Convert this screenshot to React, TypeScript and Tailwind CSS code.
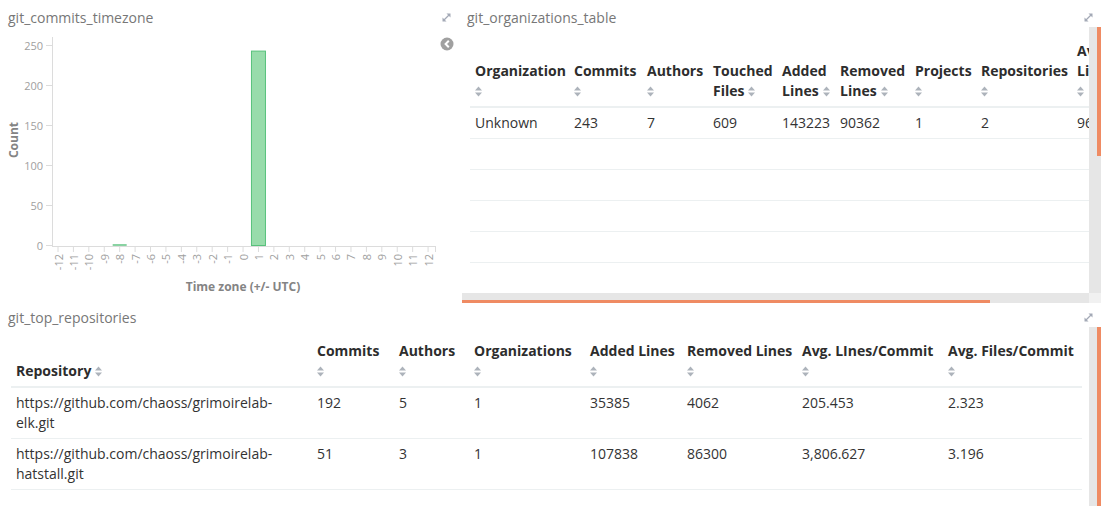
import React from 'react';

function ExpandIcon() {
  return (
    <svg width="9" height="9" viewBox="0 0 9 9">
      <line x1="1.5" y1="7.5" x2="7.5" y2="1.5" stroke="#a3a9b6" strokeWidth="1.2" />
      <path d="M4.5 0.5 H8.5 V4.5 Z" fill="#a3a9b6" />
      <path d="M0.5 4.5 V8.5 H4.5 Z" fill="#a3a9b6" />
    </svg>
  );
}

function SortIcon({ inline }: { inline?: boolean }) {
  return (
    <svg
      width="7"
      height="11"
      viewBox="0 0 7 11"
      className={inline ? 'ml-[4px] inline-block align-[-1px]' : 'inline-block align-[-1px]'}
    >
      <path d="M0 4.5 L3.5 0.5 L7 4.5 Z M0 6.5 L3.5 10.5 L7 6.5 Z" fill="#adb3bb" />
    </svg>
  );
}

type Col = { lines: string[]; inline?: boolean; w: string };

function HeaderCell({ col }: { col: Col }) {
  const last = col.lines.length - 1;
  return (
    <th
      className={`${col.w} border-b-2 border-[#ecf0f1] px-[5px] pt-[5px] pb-[5px] text-left align-bottom text-[14px] font-bold leading-[20px] text-[#2d2d2d]`}
    >
      {col.lines.map((l, i) => (
        <div key={i} className="whitespace-nowrap">
          {l}
          {col.inline && i === last && <SortIcon inline />}
        </div>
      ))}
      {!col.inline && (
        <div className="leading-[20px]">
          <SortIcon />
        </div>
      )}
    </th>
  );
}

const orgCols: Col[] = [
  { lines: ['Organization'], w: 'w-[99px]' },
  { lines: ['Commits'], w: 'w-[73px]' },
  { lines: ['Authors'], w: 'w-[66px]' },
  { lines: ['Touched', 'Files'], inline: true, w: 'w-[69px]' },
  { lines: ['Added', 'Lines'], inline: true, w: 'w-[58px]' },
  { lines: ['Removed', 'Lines'], inline: true, w: 'w-[75px]' },
  { lines: ['Projects'], w: 'w-[66px]' },
  { lines: ['Repositories'], w: 'w-[96px]' },
  { lines: ['Avg.', 'Lines/Commit'], w: 'w-[100px]' },
  { lines: ['Avg.', 'Files/Commit'], w: 'w-[100px]' },
];

const orgRow = ['Unknown', '243', '7', '609', '143223', '90362', '1', '2', '961.255', '2.506'];

const repoCols: Col[] = [
  { lines: ['Repository'], inline: true, w: 'w-[301px]' },
  { lines: ['Commits'], w: 'w-[82px]' },
  { lines: ['Authors'], w: 'w-[75px]' },
  { lines: ['Organizations'], w: 'w-[116px]' },
  { lines: ['Added Lines'], w: 'w-[97px]' },
  { lines: ['Removed Lines'], w: 'w-[115px]' },
  { lines: ['Avg. LInes/Commit'], w: 'w-[146px]' },
  { lines: ['Avg. Files/Commit'], w: 'w-[139px]' },
];

const repoRows = [
  [['https://github.com/chaoss/grimoirelab-', 'elk.git'], '192', '5', '1', '35385', '4062', '205.453', '2.323'],
  [['https://github.com/chaoss/grimoirelab-', 'hatstall.git'], '51', '3', '1', '107838', '86300', '3,806.627', '3.196'],
] as const;

const tdClass =
  'border-b border-[#ecf0f1] px-[5px] pt-[5px] pb-[5px] text-left align-top text-[14px] leading-[20px] text-[#333]';

function TimezoneChart() {
  const ticks = Array.from({ length: 25 }, (_, i) => i - 12);
  const tx = (i: number) => 58 + i * 15.42;
  const yv = (v: number) => 245.5 - v * 0.8;
  return (
    <svg width="460" height="276" viewBox="0 27 460 276" className="block">
      {/* y axis */}
      <line x1="52.5" y1="37" x2="52.5" y2="246.5" stroke="#dcdcdc" />
      {[0, 50, 100, 150, 200, 250].map((v) => (
        <g key={v}>
          <line x1="46" y1={yv(v)} x2="52.5" y2={yv(v)} stroke="#dcdcdc" />
          <text
            x="43"
            y={yv(v)}
            textAnchor="end"
            dominantBaseline="central"
            fontSize="11"
            fill="#a0a0a0"
            fontFamily="'Open Sans', sans-serif"
          >
            {v}
          </text>
        </g>
      ))}
      <text
        x="13"
        y="140"
        transform="rotate(-90 13 140)"
        textAnchor="middle"
        dominantBaseline="central"
        fontSize="12"
        fontWeight="700"
        fill="#848484"
        fontFamily="'Open Sans', sans-serif"
      >
        Count
      </text>
      {/* x axis */}
      <line x1="52" y1="246.5" x2="436" y2="246.5" stroke="#dcdcdc" />
      <line x1="435.5" y1="246.5" x2="435.5" y2="252" stroke="#dcdcdc" />
      {ticks.map((t, i) => (
        <g key={t}>
          <line x1={tx(i)} y1="246.5" x2={tx(i)} y2="252" stroke="#dcdcdc" />
          <text
            x={tx(i)}
            y="254"
            transform={`rotate(-90 ${tx(i)} 254)`}
            textAnchor="end"
            dominantBaseline="central"
            fontSize="11"
            fill="#a0a0a0"
            fontFamily="'Open Sans', sans-serif"
          >
            {t}
          </text>
        </g>
      ))}
      {/* bars */}
      <rect x={tx(4) - 7} y="244.3" width="14" height="1.4" fill="#57c17b" />
      <rect x={tx(13) - 7} y={yv(243)} width="14" height={245.5 - yv(243)} fill="#98dcab" stroke="#57c17b" />
      <text
        x="243"
        y="286"
        textAnchor="middle"
        dominantBaseline="central"
        fontSize="12"
        fontWeight="700"
        fill="#848484"
        fontFamily="'Open Sans', sans-serif"
      >
        Time zone (+/- UTC)
      </text>
      {/* legend toggle */}
      <circle cx="447" cy="44" r="6.5" fill="#a0a0a0" />
      <path d="M448.8 40.8 L445.6 44 L448.8 47.2" fill="none" stroke="#fff" strokeWidth="2" />
    </svg>
  );
}

export default function App() {
  return (
    <div className="flex h-[506px] w-[1101px] flex-col overflow-hidden bg-white font-['Open_Sans',sans-serif]">
      <div className="flex h-[303px]">
        {/* left panel */}
        <div className="flex w-[460px] flex-col">
          <div className="flex h-[27px] items-start justify-between pl-[8px] pr-[9px] pt-[9px]">
            <span className="text-[14px] leading-[18px] text-[#777]">git_commits_timezone</span>
            <span className="pt-[4px]">
              <ExpandIcon />
            </span>
          </div>
          <TimezoneChart />
        </div>
        {/* right panel */}
        <div className="ml-[2px] flex min-w-0 flex-1 flex-col">
          <div className="flex h-[27px] items-start justify-between pl-[5px] pr-[8px] pt-[9px]">
            <span className="text-[14px] leading-[18px] text-[#777]">git_organizations_table</span>
            <span className="pt-[4px]">
              <ExpandIcon />
            </span>
          </div>
          <div className="flex min-h-0 flex-1">
            <div className="min-w-0 flex-1 overflow-hidden pl-[8px] pt-[9px]">
              <table className="w-[802px] table-fixed border-collapse">
                <thead>
                  <tr>
                    {orgCols.map((c, i) => (
                      <HeaderCell key={i} col={c} />
                    ))}
                  </tr>
                </thead>
                <tbody>
                  <tr>
                    {orgRow.map((v, i) => (
                      <td key={i} className={`${tdClass} whitespace-nowrap`}>
                        {v}
                      </td>
                    ))}
                  </tr>
                  {[0, 1, 2, 3].map((r) => (
                    <tr key={r} className="h-[31px] border-b border-[#ecf0f1]">
                      <td colSpan={orgCols.length}></td>
                    </tr>
                  ))}
                </tbody>
              </table>
            </div>
            <div className="flex w-[12px] shrink-0 justify-end bg-[#e6e6e6]">
              <div className="h-[129px] w-[4px] bg-[#ef8b63]" />
            </div>
          </div>
          <div className="flex h-[10px]">
            <div className="flex flex-1 flex-col justify-end bg-[#e6e6e6]">
              <div className="h-[3px] w-[528px] bg-[#ef8b63]" />
            </div>
            <div className="w-[12px] bg-[#f1f1f1]" />
          </div>
        </div>
      </div>
      {/* bottom panel */}
      <div className="flex min-h-0 flex-1 flex-col">
        <div className="flex h-[24px] items-start justify-between pl-[8px] pr-[8px] pt-[6px]">
          <span className="text-[14px] leading-[18px] text-[#777]">git_top_repositories</span>
          <span className="pt-[4px]">
            <ExpandIcon />
          </span>
        </div>
        <div className="flex min-h-0 flex-1">
          <div className="min-w-0 flex-1 overflow-hidden pl-[11px] pt-[9px]">
            <table className="w-[1071px] table-fixed border-collapse">
              <thead>
                <tr>
                  {repoCols.map((c, i) => (
                    <HeaderCell key={i} col={c} />
                  ))}
                </tr>
              </thead>
              <tbody>
                {repoRows.map((row, r) => (
                  <tr key={r}>
                    {row.map((v, i) => (
                      <td key={i} className={tdClass}>
                        {Array.isArray(v) ? (
                          <>
                            {v[0]}
                            <br />
                            {v[1]}
                          </>
                        ) : (
                          v
                        )}
                        {!Array.isArray(v) && (
                          <>
                            <br />
                            &nbsp;
                          </>
                        )}
                      </td>
                    ))}
                  </tr>
                ))}
              </tbody>
            </table>
          </div>
          <div className="flex w-[12px] shrink-0 justify-end bg-[#e6e6e6]">
            <div className="w-[4px] bg-[#ef8b63]" />
          </div>
        </div>
      </div>
    </div>
  );
}
